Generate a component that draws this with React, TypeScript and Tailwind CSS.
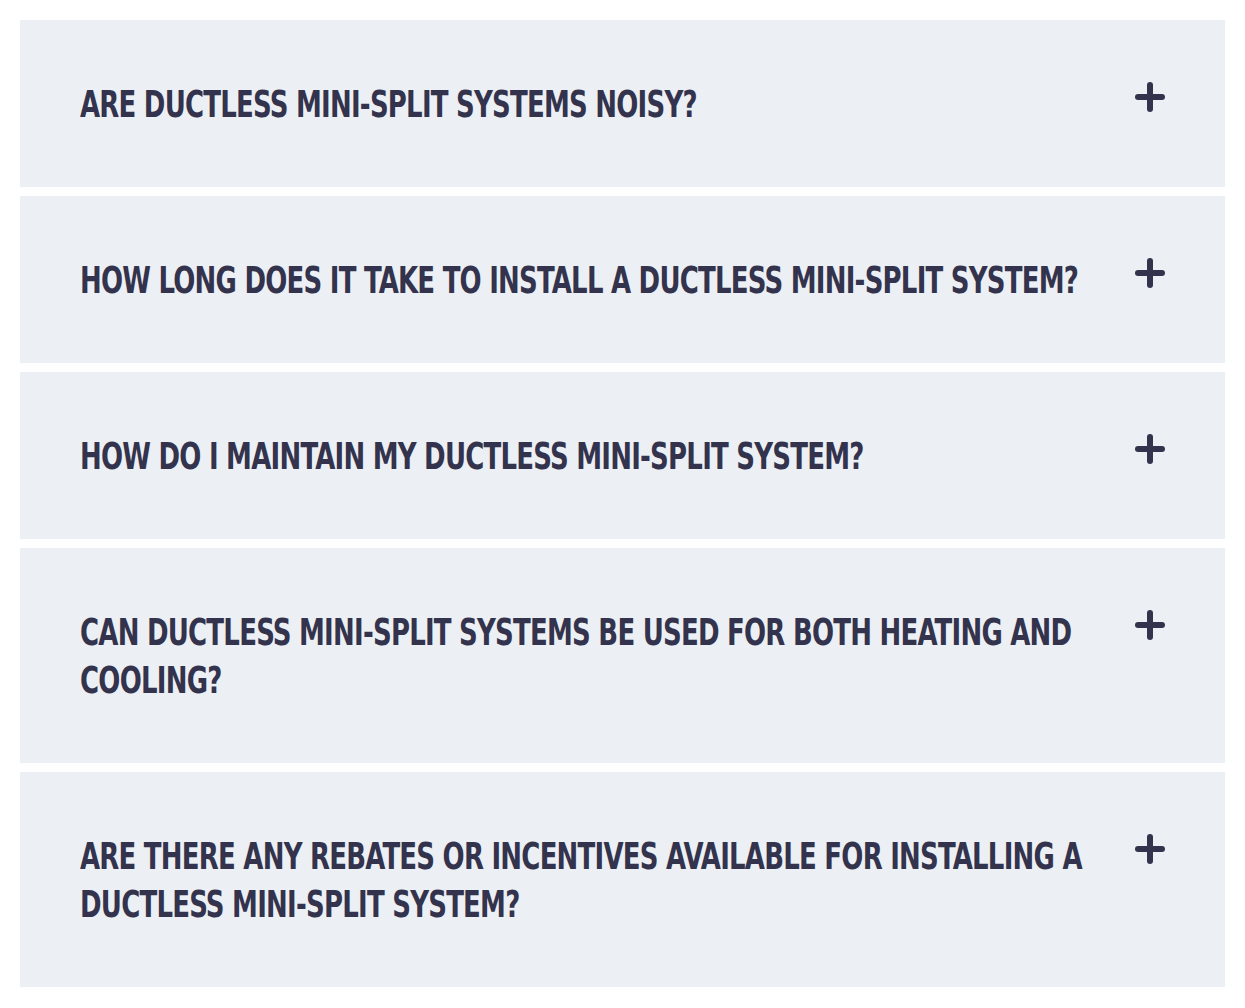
import React, { useState } from 'react';

interface FaqItem {
    question: string;
    answer: string;
}

const faqs: FaqItem[] = [
    {
        question: 'Are ductless mini-split systems noisy?',
        answer: 'Modern ductless units are very quiet. The indoor head typically runs at a whisper, and the compressor sits outside.',
    },
    {
        question: 'How long does it take to install a ductless mini-split system?',
        answer: 'Most single-zone installs are finished in a day. Multi-zone systems can take one to three days.',
    },
    {
        question: 'How do I maintain my ductless mini-split system?',
        answer: 'Clean the filters monthly, keep the outdoor unit clear of debris, and book a yearly tune-up.',
    },
    {
        question: 'Can ductless mini-split systems be used for both heating and cooling?',
        answer: 'Yes. Mini-splits are heat pumps, so the same system keeps you warm in winter and cool in summer.',
    },
    {
        question: 'Are there any rebates or incentives available for installing a ductless mini-split system?',
        answer: 'Many utilities and federal programs offer rebates and tax credits for high-efficiency heat pumps.',
    },
];

const PlusIcon: React.FC<{ open: boolean }> = ({ open }) => (
    <svg width="30" height="30" viewBox="0 0 30 30" fill="none" stroke="currentColor" strokeWidth="6" strokeLinecap="round">
        <line x1="3" y1="15" x2="27" y2="15" />
        {!open && <line x1="15" y1="3" x2="15" y2="27" />}
    </svg>
);

const FaqRow: React.FC<{ item: FaqItem; isOpen: boolean; onToggle: () => void }> = ({ item, isOpen, onToggle }) => (
    <div className="bg-[#eceff3] px-[60px] pt-[60px] pb-[59px]">
        <button onClick={onToggle} className="w-full flex items-start gap-[30px] text-left text-[#33334d]">
            <div className="flex-1 min-w-0">
                {/* condensed heading: squeeze the bold face horizontally, widened so it wraps at the box edge */}
                <h3
                    className="w-[131.5%] origin-left scale-x-[0.76] uppercase font-bold text-[38px] leading-[48px] tracking-[-1px]"
                    style={{ fontFamily: '"DejaVu Sans Condensed", "DejaVu Sans", sans-serif' }}
                >
                    {item.question}
                </h3>
            </div>
            <span className="shrink-0 mt-[2px]">
                <PlusIcon open={isOpen} />
            </span>
        </button>
        {isOpen && (
            <p className="mt-4 text-lg text-[#4b4b63]" style={{ fontFamily: '"Open Sans", sans-serif' }}>
                {item.answer}
            </p>
        )}
    </div>
);

export default function App() {
    const [openIndex, setOpenIndex] = useState<number | null>(null);

    return (
        <div className="min-h-screen bg-white p-[20px]">
            <div className="flex flex-col gap-[9px]">
                {faqs.map((item, i) => (
                    <FaqRow
                        key={item.question}
                        item={item}
                        isOpen={openIndex === i}
                        onToggle={() => setOpenIndex(openIndex === i ? null : i)}
                    />
                ))}
            </div>
        </div>
    );
}
